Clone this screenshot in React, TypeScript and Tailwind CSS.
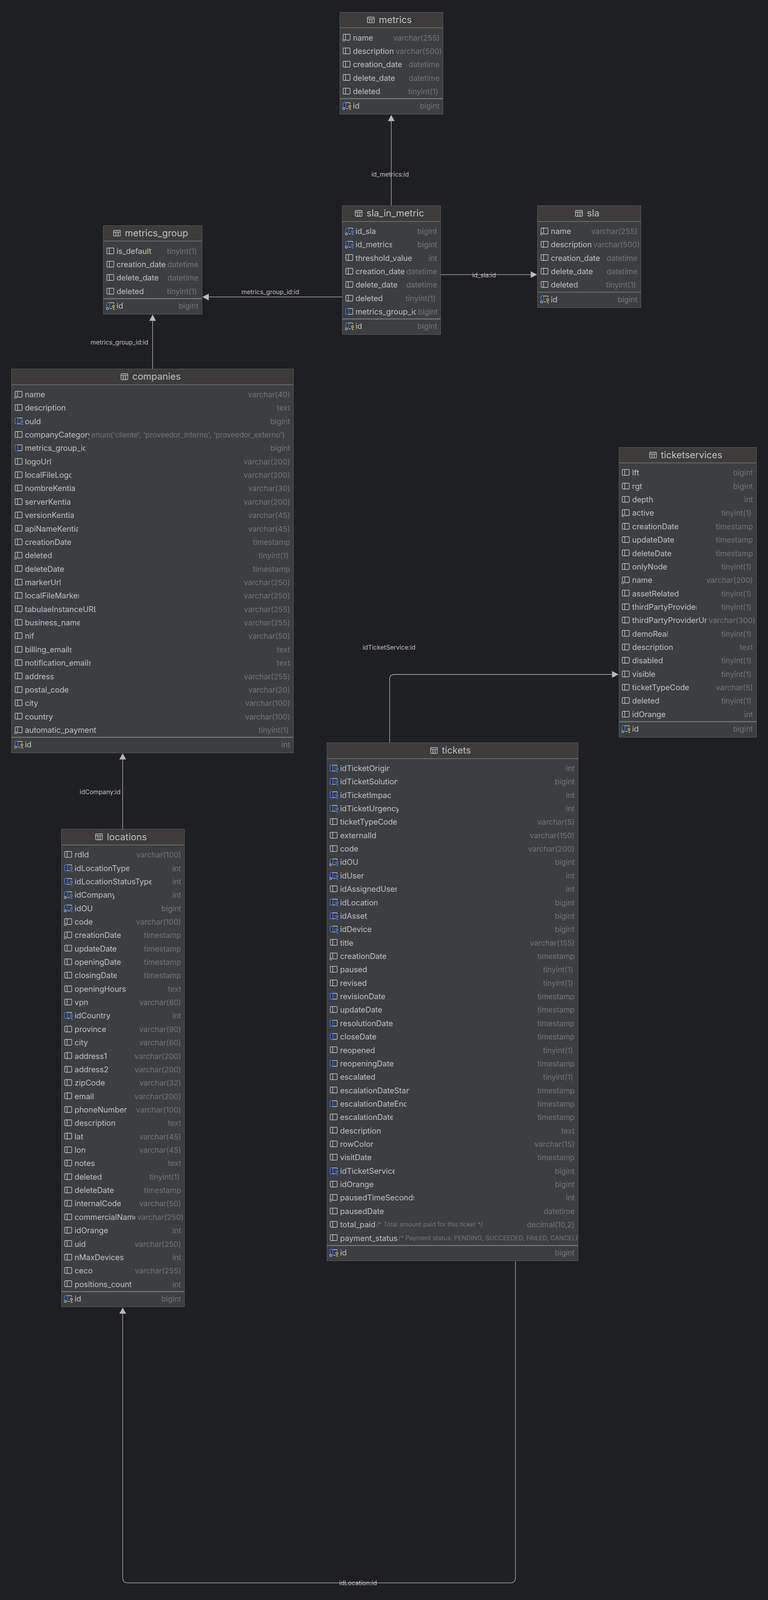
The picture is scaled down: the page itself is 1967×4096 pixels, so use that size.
const S = 1967 / 2748;
const px = (v: number) => v * S;

type Kind = "p" | "n" | "b" | "f" | "fn" | "pk";

// name, type, icon, clip width in reference px, comment
type Row = [string, string, Kind?, number?, string?];

type Table = {
  title: string;
  x: number;
  y: number;
  w: number;
  rows: Row[];
  pk?: Row;
};

const tables: Table[] = [
  {
    title: "metrics",
    x: 1215,
    y: 43,
    w: 371,
    rows: [
      ["name", "varchar(255)", "n"],
      ["description", "varchar(500)", "p", 145],
      ["creation_date", "datetime", "p", 175],
      ["delete_date", "datetime"],
      ["deleted", "tinyint(1)"],
    ],
    pk: ["id", "bigint", "pk"],
  },
  {
    title: "sla_in_metric",
    x: 1224,
    y: 735,
    w: 353,
    rows: [
      ["id_sla", "bigint", "fn"],
      ["id_metrics", "bigint", "fn", 131],
      ["threshold_value", "int", "p", 203],
      ["creation_date", "datetime", "p", 175],
      ["delete_date", "datetime"],
      ["deleted", "tinyint(1)"],
      ["metrics_group_id", "bigint", "b", 217],
    ],
    pk: ["id", "bigint", "pk"],
  },
  {
    title: "sla",
    x: 1923,
    y: 735,
    w: 371,
    rows: [
      ["name", "varchar(255)", "n"],
      ["description", "varchar(500)", "p", 145],
      ["creation_date", "datetime", "p", 175],
      ["delete_date", "datetime"],
      ["deleted", "tinyint(1)"],
    ],
    pk: ["id", "bigint", "pk"],
  },
  {
    title: "metrics_group",
    x: 369,
    y: 806,
    w: 354,
    rows: [
      ["is_default", "tinyint(1)"],
      ["creation_date", "datetime", "p", 175],
      ["delete_date", "datetime"],
      ["deleted", "tinyint(1)"],
    ],
    pk: ["id", "bigint", "pk"],
  },
  {
    title: "companies",
    x: 41,
    y: 1319,
    w: 1010,
    rows: [
      ["name", "varchar(40)", "n"],
      ["description", "text"],
      ["ouId", "bigint", "f"],
      ["companyCategory", "enum('cliente', 'proveedor_interno', 'proveedor_externo')", "p", 231],
      ["metrics_group_id", "bigint", "b", 217],
      ["logoUrl", "varchar(200)"],
      ["localFileLogo", "varchar(200)", "p", 167],
      ["nombreKentia", "varchar(30)", "p", 179],
      ["serverKentia", "varchar(200)", "p", 163],
      ["versionKentia", "varchar(45)", "p", 175],
      ["apiNameKentia", "varchar(45)", "p", 191],
      ["creationDate", "timestamp", "p", 165],
      ["deleted", "tinyint(1)", "n"],
      ["deleteDate", "timestamp"],
      ["markerUrl", "varchar(250)", "p", 127],
      ["localFileMarker", "varchar(250)", "p", 193],
      ["tabulaeInstanceURL", "varchar(255)", "p", 253],
      ["business_name", "varchar(255)", "p", 197],
      ["nif", "varchar(50)"],
      ["billing_emails", "text", "p", 167],
      ["notification_emails", "text", "p", 235],
      ["address", "varchar(255)"],
      ["postal_code", "varchar(20)", "p", 155],
      ["city", "varchar(100)"],
      ["country", "varchar(100)"],
      ["automatic_payment", "tinyint(1)", "n", 261],
    ],
    pk: ["id", "int", "pk"],
  },
  {
    title: "ticketservices",
    x: 2214,
    y: 1599,
    w: 493,
    rows: [
      ["lft", "bigint"],
      ["rgt", "bigint"],
      ["depth", "int"],
      ["active", "tinyint(1)", "n"],
      ["creationDate", "timestamp", "p", 165],
      ["updateDate", "timestamp"],
      ["deleteDate", "timestamp"],
      ["onlyNode", "tinyint(1)"],
      ["name", "varchar(200)", "n"],
      ["assetRelated", "tinyint(1)", "p", 167],
      ["thirdPartyProvider", "tinyint(1)", "p", 230],
      ["thirdPartyProviderUrl", "varchar(300)", "p", 267],
      ["demoReal", "tinyint(1)", "p", 127],
      ["description", "text"],
      ["disabled", "tinyint(1)"],
      ["visible", "tinyint(1)"],
      ["ticketTypeCode", "varchar(5)", "p", 203],
      ["deleted", "tinyint(1)"],
      ["idOrange", "int"],
    ],
    pk: ["id", "bigint", "pk"],
  },
  {
    title: "tickets",
    x: 1169,
    y: 2656,
    w: 900,
    rows: [
      ["idTicketOrigin", "int", "f", 177],
      ["idTicketSolution", "bigint", "f", 205],
      ["idTicketImpact", "int", "f", 185],
      ["idTicketUrgency", "int", "f", 209],
      ["ticketTypeCode", "varchar(5)", "p", 203],
      ["externalId", "varchar(150)"],
      ["code", "varchar(200)"],
      ["idOU", "bigint", "fn"],
      ["idUser", "int", "fn"],
      ["idAssignedUser", "int", "p", 203],
      ["idLocation", "bigint", "f", 134],
      ["idAsset", "bigint", "f"],
      ["idDevice", "bigint", "f"],
      ["title", "varchar(155)"],
      ["creationDate", "timestamp", "n", 165],
      ["paused", "tinyint(1)"],
      ["revised", "tinyint(1)"],
      ["revisionDate", "timestamp", "b", 161],
      ["updateDate", "timestamp"],
      ["resolutionDate", "timestamp", "b", 189],
      ["closeDate", "timestamp", "b"],
      ["reopened", "tinyint(1)"],
      ["reopeningDate", "timestamp", "b", 191],
      ["escalated", "tinyint(1)"],
      ["escalationDateStart", "timestamp", "p", 249],
      ["escalationDateEnd", "timestamp", "b", 237],
      ["escalationDate", "timestamp", "p", 189],
      ["description", "text"],
      ["rowColor", "varchar(15)"],
      ["visitDate", "timestamp"],
      ["idTicketService", "bigint", "f", 195],
      ["idOrange", "bigint"],
      ["pausedTimeSeconds", "int", "n", 265],
      ["pausedDate", "datetime"],
      ["total_paid", "decimal(10,2)", "p", undefined, "/* Total amount paid for this ticket */"],
      ["payment_status", "", "p", undefined, "/* Payment status: PENDING, SUCCEEDED, FAILED, CANCELED */"],
    ],
    pk: ["id", "bigint", "pk"],
  },
  {
    title: "locations",
    x: 219,
    y: 2965,
    w: 442,
    rows: [
      ["rdId", "varchar(100)"],
      ["idLocationType", "int", "f", 195],
      ["idLocationStatusType", "int", "f", 275],
      ["idCompany", "int", "fn", 143],
      ["idOU", "bigint", "fn"],
      ["code", "varchar(100)", "n"],
      ["creationDate", "timestamp", "n", 165],
      ["updateDate", "timestamp"],
      ["openingDate", "timestamp", "p", 165],
      ["closingDate", "timestamp", "p", 151],
      ["openingHours", "text"],
      ["vpn", "varchar(80)"],
      ["idCountry", "int", "f"],
      ["province", "varchar(90)"],
      ["city", "varchar(60)"],
      ["address1", "varchar(200)"],
      ["address2", "varchar(200)"],
      ["zipCode", "varchar(32)"],
      ["email", "varchar(200)"],
      ["phoneNumber", "varchar(100)"],
      ["description", "text"],
      ["lat", "varchar(45)"],
      ["lon", "varchar(45)"],
      ["notes", "text"],
      ["deleted", "tinyint(1)"],
      ["deleteDate", "timestamp"],
      ["internalCode", "varchar(50)", "p", 165],
      ["commercialName", "varchar(250)", "p", 217],
      ["idOrange", "int"],
      ["uid", "varchar(250)"],
      ["nMaxDevices", "int"],
      ["ceco", "varchar(255)"],
      ["positions_count", "int", "p", 203],
    ],
    pk: ["id", "bigint", "pk"],
  },
];

const labels: [string, number, number][] = [
  ["id_metrics:id", 1396, 623],
  ["id_sla:id", 1732, 984],
  ["metrics_group_id:id", 967, 1044],
  ["metrics_group_id:id", 427, 1224],
  ["idCompany:id", 358, 2832],
  ["idTicketService:id", 1392, 2315],
  ["idLocation:id", 1281, 5661],
];

const WHITE = "#ced0d6";
const BLUE = "#548af7";
const YELLOW = "#f2c55c";
const BODY = "#3c3f41";

function FieldIcon({ kind }: { kind: Kind }) {
  const blue = kind === "b" || kind === "f" || kind === "fn" || kind === "pk";
  const circle = kind === "n" || kind === "fn" || kind === "pk";
  const key = kind === "f" || kind === "fn" || kind === "pk";
  const keyColor = kind === "pk" ? YELLOW : BLUE;

  let right = "M10 1H24a2 2 0 0 1 2 2V20a2 2 0 0 1-2 2H10";
  if (key) right = circle ? "M10 1H24a2 2 0 0 1 2 2V6M12 22H20" : "M10 1H24a2 2 0 0 1 2 2V6M10 22H20";

  let left = "M10 1H3a2 2 0 0 0-2 2V20a2 2 0 0 0 2 2H10V1";
  if (circle) left = "M10 1H3a2 2 0 0 0-2 2V17M10 1V22";

  return (
    <svg
      viewBox="0 0 27 23"
      fill="none"
      strokeWidth="1.9"
      className="mb-[2px] h-[16.46px] w-[19.33px] shrink-0 overflow-visible"
    >
      {blue && <path d={circle ? "M10 1H3a2 2 0 0 0-2 2V18L10 22Z" : left} fill="#25324d" stroke="none" />}
      <path d={right} stroke={WHITE} />
      <path d={left} stroke={blue ? BLUE : WHITE} />
      {circle && <circle cx="3" cy="22" r="3.7" fill={BODY} stroke={WHITE} strokeWidth="1.7" />}
      {key && (
        <g stroke={keyColor}>
          <circle cx="25" cy="14.5" r="3.6" fill={BODY} />
          <path d="M25 18V27M25 25H30" />
        </g>
      )}
    </svg>
  );
}

function TableIcon() {
  return (
    <svg viewBox="0 0 27 23" fill="#44464b" stroke={WHITE} strokeWidth="1.9" className="h-[16.46px] w-[19.33px] shrink-0">
      <rect x="1" y="1" width="25" height="21" rx="3" />
      <path d="M1 7.5H26M9.5 7.5V22M17.5 7.5V22" fill="none" />
    </svg>
  );
}

function Field({ row }: { row: Row }) {
  const [name, type, kind = "p", clip, comment] = row;
  const isEnum = type.startsWith("enum");
  const gap = isEnum ? 22 : type === "tinyint(1)" ? 5 : 0;

  return (
    <div className={`flex h-[34.36px] items-center pl-[7.6px] ${type ? "pr-[8.3px]" : ""}`}>
      <FieldIcon kind={kind} />
      <span
        className="ml-[6.4px] shrink-0 overflow-hidden whitespace-pre text-[19.8px] leading-[34px] text-[#bcbec4]"
        style={clip ? { width: px(clip) } : undefined}
      >
        {name}
      </span>
      {comment && (
        <span className="ml-[2px] min-w-0 flex-1 overflow-hidden whitespace-pre text-[15.9px] leading-[34px] text-[#6f737a]">
          {comment}
        </span>
      )}
      {type && (
        <span
          className={`ml-auto shrink-0 whitespace-pre pl-[5px] leading-[34px] text-[#6f737a] ${isEnum ? "text-[18.5px]" : "text-[19.3px]"}`}
          style={gap ? { marginRight: px(gap) } : undefined}
        >
          {type}
        </span>
      )}
    </div>
  );
}

function DbTable({ table }: { table: Table }) {
  return (
    <div
      className="absolute flex flex-col border border-[#5f6165] bg-[#3c3f41]"
      style={{ left: px(table.x), top: px(table.y), width: px(table.w) }}
    >
      <div className="flex h-[40.5px] items-center justify-center gap-[10.7px] border-b-2 border-[#6b6b6b] bg-[#3d3c3b] pr-[10px]">
        <TableIcon />
        <span className="text-[24px] leading-none text-[#bcbec4]">{table.title}</span>
      </div>
      <div className="flex flex-col pt-[7.16px]">
        {table.rows.map((row) => (
          <Field key={row[0]} row={row} />
        ))}
      </div>
      <div className="h-[2.86px] bg-[#6f6f6d]" />
      {table.pk && <Field row={table.pk} />}
      <div className="h-[3.3px]" />
    </div>
  );
}

function Connectors() {
  return (
    <svg viewBox="0 0 2748 5722" fill="none" className="absolute left-0 top-0 h-[4096px] w-[1967px]">
      <g stroke="#a9a9a9" strokeWidth="2.2">
        <path d="M1400 735V430" />
        <path d="M1577 982H1902" />
        <path d="M1224 1062H743" />
        <path d="M546 1319V1144" />
        <path d="M439 2965V2713" />
        <path d="M1394 2656V2430Q1394 2412 1412 2412H2192" />
        <path d="M1844.5 4511V5641Q1844.5 5661 1824 5661H459Q439 5661 439 5641V4696" />
      </g>
      <g fill="#b9b9b9">
        <path d="M1400 411L1388 433H1412Z" />
        <path d="M1922 982L1899 970V994Z" />
        <path d="M724 1062L747 1050V1074Z" />
        <path d="M546 1125L534 1147H558Z" />
        <path d="M439 2694L427 2716H451Z" />
        <path d="M2213 2412L2190 2400V2424Z" />
        <path d="M439 4676L427 4698H451Z" />
      </g>
    </svg>
  );
}

export default function App() {
  return (
    <div className="relative h-[4096px] w-[1967px] overflow-hidden bg-[#1e1f22] [font-family:Inter,sans-serif]">
      <Connectors />
      {labels.map(([text, x, y]) => (
        <div
          key={`${text}${x}`}
          className="absolute -translate-x-1/2 -translate-y-1/2 whitespace-pre text-[16px] leading-none text-[#bdbdbd]"
          style={{ left: px(x), top: px(y) }}
        >
          {text}
        </div>
      ))}
      {tables.map((table) => (
        <DbTable key={table.title} table={table} />
      ))}
    </div>
  );
}
